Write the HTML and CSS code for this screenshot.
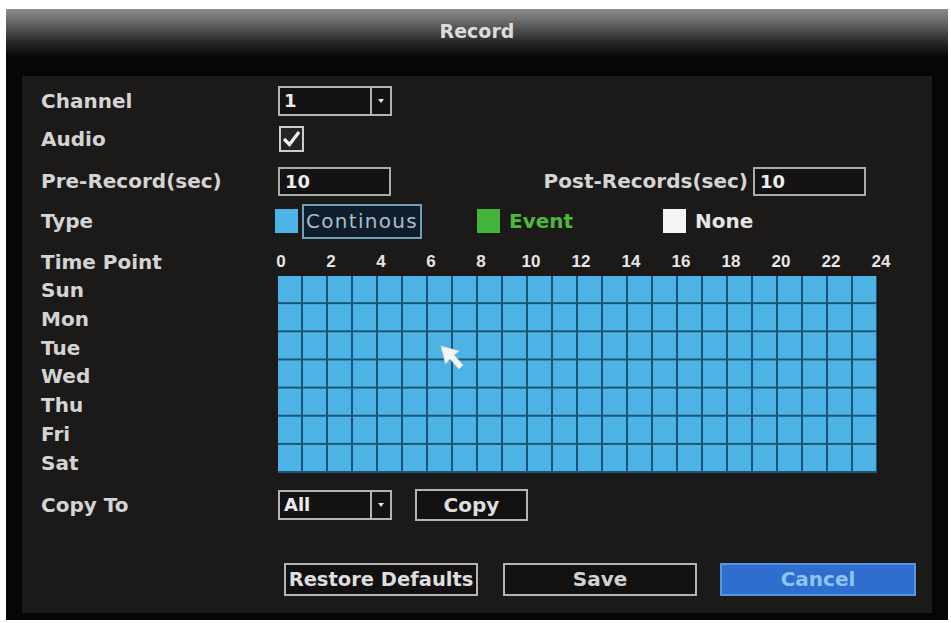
FILE: index.html
```html
<!DOCTYPE html>
<html lang="en">
<head>
<meta charset="utf-8">
<title>Record</title>
<link rel="stylesheet" href="styles.css">
</head>
<body>
<div class="window">
  <div class="titlebar"><span class="title">Record</span></div>
  <div class="panel">
    <div class="row r-channel">
      <span class="label">Channel</span>
      <div class="select">
        <span class="select-value">1</span>
        <span class="select-btn"><svg width="6" height="4" viewBox="0 0 6 4"><path d="M0 0H6L3 4Z" fill="#e6e6e6"/></svg></span>
      </div>
    </div>
    <div class="row r-audio">
      <span class="label">Audio</span>
      <span class="checkbox"><svg width="21" height="22" viewBox="0 0 21 22"><path d="M3 11 L8.5 16.5 L18 4" fill="none" stroke="#f0f0f0" stroke-width="3.2"/></svg></span>
    </div>
    <div class="row r-pre">
      <span class="label">Pre-Record(sec)</span>
      <div class="ctrl-line ctrl-wide">
        <span class="input">10</span>
        <span class="label post-label">Post-Records(sec)</span>
        <span class="input">10</span>
      </div>
    </div>
    <div class="row r-type">
      <span class="label">Type</span>
      <div class="ctrl-line">
        <span class="swatch sw-blue"></span>
        <span class="type-box">Continous</span>
        <span class="swatch sw-green"></span>
        <span class="type-text t-green">Event</span>
        <span class="swatch sw-white"></span>
        <span class="type-text t-white">None</span>
      </div>
    </div>
    <div class="row r-time">
      <span class="label">Time Point</span>
      <div class="hours">
        <span>0</span><span>2</span><span>4</span><span>6</span><span>8</span><span>10</span><span>12</span><span>14</span><span>16</span><span>18</span><span>20</span><span>22</span><span>24</span>
      </div>
    </div>
    <div class="row r-sched">
      <div class="days">
        <span class="label">Sun</span>
        <span class="label">Mon</span>
        <span class="label">Tue</span>
        <span class="label">Wed</span>
        <span class="label">Thu</span>
        <span class="label">Fri</span>
        <span class="label">Sat</span>
      </div>
      <div class="schedule"></div>
    </div>
    <div class="row r-copy">
      <span class="label">Copy To</span>
      <div class="ctrl-line">
        <div class="select select-copy">
          <span class="select-value">All</span>
          <span class="select-btn"><svg width="6" height="4" viewBox="0 0 6 4"><path d="M0 0H6L3 4Z" fill="#e6e6e6"/></svg></span>
        </div>
        <span class="btn btn-copy">Copy</span>
      </div>
    </div>
    <div class="actions">
      <span class="btn btn-restore">Restore Defaults</span>
      <span class="btn btn-save">Save</span>
      <span class="btn btn-cancel">Cancel</span>
    </div>
    <svg class="cursor" width="26" height="28" viewBox="0 0 26 28"><path d="M1 1 L19 6 L14 10 L23 20 L19 24 L10 14 L5.5 19 Z" fill="#f4f4f4" stroke="#d0d0d0" stroke-width="0.8"/></svg>
  </div>
</div>
</body>
</html>
```
FILE: styles.css
```css
* { box-sizing: border-box; }
body {
  margin: 0;
  background: #ffffff;
  font-family: "DejaVu Sans", "Liberation Sans", Arial, sans-serif;
}
.window {
  margin: 9px 0 0 6px;
  width: 942px;
  height: 611px;
  background: #060606;
}
.titlebar {
  height: 67px;
  padding-top: 12px;
  text-align: center;
  background: linear-gradient(to bottom, #8e8e8e 0px, #5e5e5e 16px, #262626 34px, #070707 48px, #060606 67px);
}
.title {
  color: #dcdcdc;
  font-size: 19px;
  font-weight: bold;
  line-height: 20px;
}
.panel {
  position: relative;
  margin: 0 16px;
  height: 537px;
  background: #1c1a19;
  padding: 8px 0 0 19px;
}
.row {
  display: grid;
  grid-template-columns: 237px 1fr;
  align-items: center;
}
.label {
  color: #d4d4d4;
  font-size: 20px;
  font-weight: bold;
  line-height: 20px;
  white-space: nowrap;
}
.r-channel { height: 34px; }
.r-audio { height: 42px; }
.r-pre { height: 42px; }
.r-type { height: 38px; }
.r-time { height: 36px; padding-top: 8px; }
.r-sched { height: 201.6px; align-items: start; }
.r-copy { height: 54px; }
.ctrl-line {
  display: flex;
  align-items: center;
}
.ctrl-wide { width: 588px; }
.select {
  display: flex;
  width: 114px;
  height: 30px;
  border: 2px solid #b4b4b4;
  background: #141212;
}
.select-value {
  flex: 1;
  color: #ececec;
  font-size: 18px;
  font-weight: bold;
  line-height: 26px;
  padding-left: 4px;
}
.select-btn {
  width: 20px;
  border-left: 2px solid #b4b4b4;
  display: flex;
  align-items: center;
  justify-content: center;
}
.checkbox {
  width: 25px;
  height: 26px;
  margin-left: 1px;
  border: 2px solid #cdcdcd;
  background: #262424;
  display: flex;
  align-items: center;
  justify-content: center;
}
.input {
  width: 113px;
  height: 29px;
  border: 2px solid #ababab;
  background: #141212;
  color: #ececec;
  font-size: 18px;
  font-weight: bold;
  line-height: 25px;
  padding-left: 5px;
}
.post-label { margin: 0 5px 0 auto; }
.swatch {
  width: 23px;
  height: 24px;
}
.sw-blue { background: #4cb4e6; margin-left: -3px; }
.sw-green { background: #45b43a; margin-left: 55px; }
.sw-white { background: #f4f4f4; margin-left: 90px; }
.type-box {
  margin-left: 4px;
  width: 120px;
  height: 35px;
  border: 2px solid #6f9fb9;
  background: #0f1e2a;
  color: #a9bfcc;
  font-size: 20px;
  letter-spacing: 1.3px;
  line-height: 31px;
  padding-left: 2px;
  white-space: nowrap;
  overflow: hidden;
}
.type-text {
  font-size: 20px;
  font-weight: bold;
  margin-left: 9px;
}
.t-green { color: #4fb83c; }
.t-white { color: #e6e6e6; }
.hours {
  display: grid;
  grid-template-columns: repeat(13, 50px);
  justify-items: center;
  margin-left: -22px;
  color: #e6e6e6;
  font-family: "Liberation Sans", Arial, sans-serif;
  font-size: 17px;
  font-weight: bold;
  line-height: 20px;
}
.days {
  display: flex;
  flex-direction: column;
}
.days .label {
  height: 28.8px;
  line-height: 28.8px;
}
.schedule {
  width: 599px;
  height: 197px;
  background-color: #4cb3e4;
  background-image:
    linear-gradient(to right, transparent 23px, #195479 23px),
    linear-gradient(to bottom, transparent calc(100% - 2px), #195479 calc(100% - 2px));
  background-size: 25px 100%, 100% calc(100% / 7);
}
.btn {
  display: flex;
  align-items: center;
  justify-content: center;
  height: 33px;
  border: 2px solid #b4b4b4;
  background: #121010;
  color: #dedede;
  font-size: 20px;
  font-weight: bold;
  white-space: nowrap;
}
.btn-copy { width: 113px; height: 32px; margin-left: 23px; }
.actions {
  display: flex;
  margin: 31px 0 0 243px;
}
.btn-restore { width: 194px; font-size: 19.5px; }
.btn-save { width: 194px; margin-left: 25px; color: #d2d2d2; }
.btn-cancel {
  width: 196px;
  margin-left: 23px;
  background: #2e6ecf;
  border-color: #5896e2;
  color: #8ec4f6;
}
.cursor {
  position: absolute;
  left: 418px;
  top: 269px;
}
```
